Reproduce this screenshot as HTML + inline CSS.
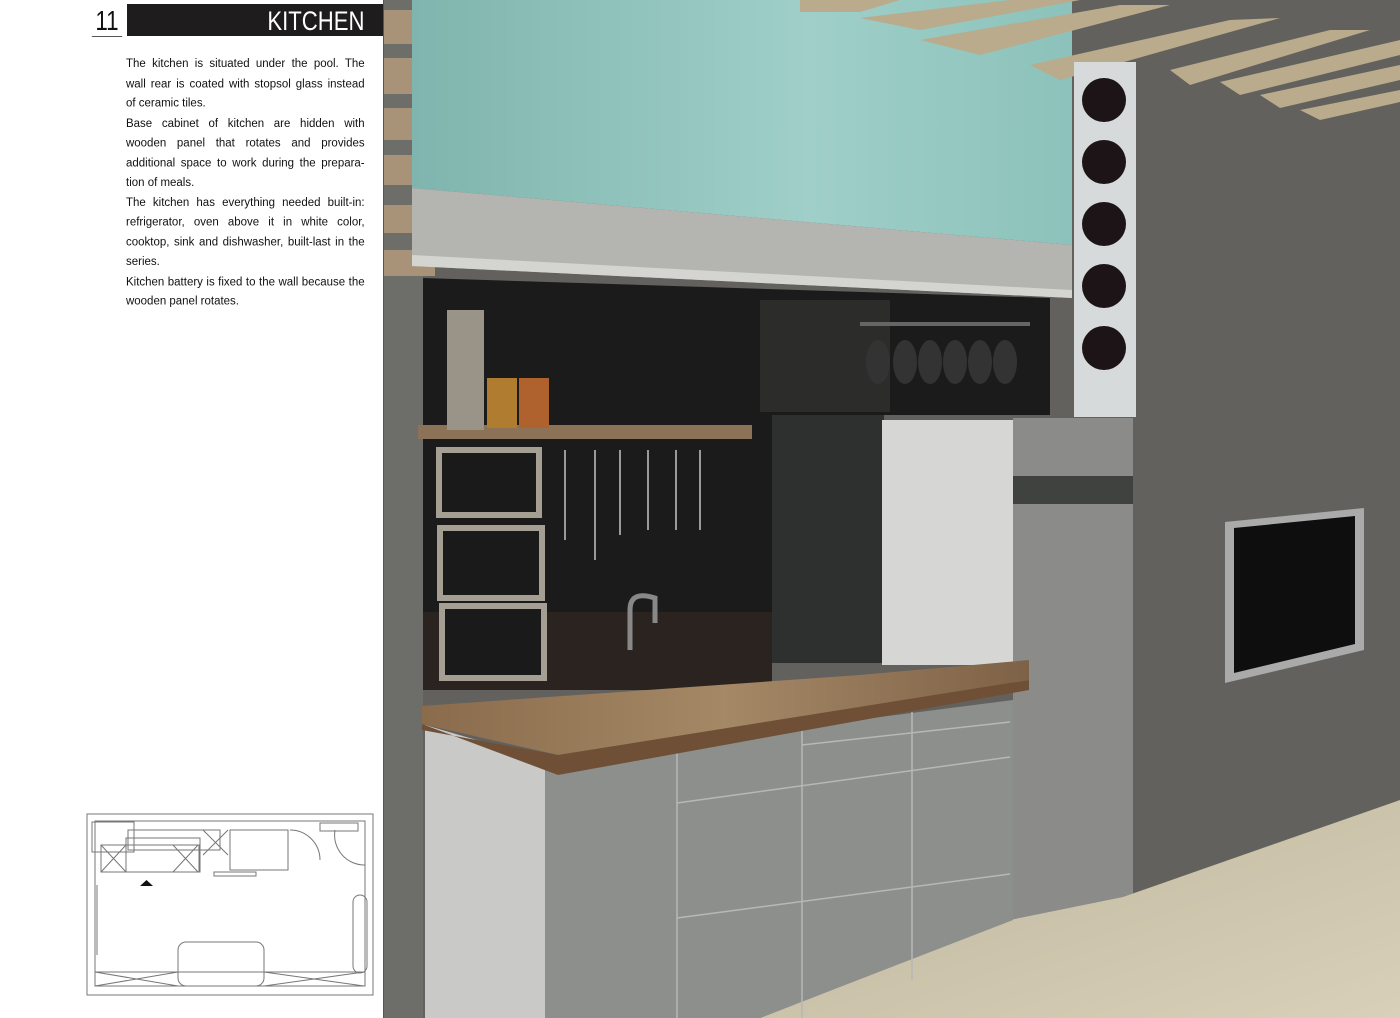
<!DOCTYPE html>
<html><head><meta charset="utf-8"><style>
*{margin:0;padding:0}
body{width:1400px;height:1018px;background:#fff;position:relative;overflow:hidden;font-family:"Liberation Sans",sans-serif}
#num{position:absolute;left:88px;top:5px;width:38px;height:31px;border-bottom:1px solid #555;font-size:28px;line-height:32px;color:#111;text-align:center;transform:scaleX(.8)}
#bar{position:absolute;left:127px;top:4px;width:256px;height:32px;background:#1e1c1c}
#bar span{position:absolute;right:18px;top:2px;color:#fff;font-size:27px;line-height:30px;transform:scaleX(.82);transform-origin:right}
#txt{position:absolute;left:126px;top:53px;width:291px;font-size:14px;line-height:22.5px;color:#111;transform:scale(.82,.88);transform-origin:left top}
#txt span{display:block;white-space:nowrap;text-align:justify;text-align-last:justify}
#txt span.l{text-align-last:left}
svg{position:absolute;left:0;top:0}
</style></head><body>
<div id="num">11</div>
<div id="bar"><span>KITCHEN</span></div>
<div id="txt">
<span>The kitchen is situated under the pool. The</span>
<span>wall rear is coated with stopsol glass instead</span>
<span class="l">of ceramic tiles.</span>
<span>Base cabinet of kitchen are hidden with</span>
<span>wooden panel that rotates and provides</span>
<span>additional space to work during the prepara-</span>
<span class="l">tion of meals.</span>
<span>The kitchen has everything needed built-in:</span>
<span>refrigerator, oven above it in white color,</span>
<span>cooktop, sink and dishwasher, built-last in the</span>
<span class="l">series.</span>
<span>Kitchen battery is fixed to the wall because the</span>
<span class="l">wooden panel rotates.</span>
</div>
<svg width="1400" height="1018" viewBox="0 0 1400 1018">
<defs>
<linearGradient id="gl" x1="0" y1="0" x2="1" y2="0"><stop offset="0" stop-color="#7fb5ae"/><stop offset=".6" stop-color="#9fcfc8"/><stop offset="1" stop-color="#8cc2bb"/></linearGradient>
<linearGradient id="wd" x1="0" y1="0" x2="1" y2="0"><stop offset="0" stop-color="#8a6c4c"/><stop offset=".5" stop-color="#a58866"/><stop offset="1" stop-color="#7e6247"/></linearGradient>
<linearGradient id="fl" x1="0" y1="0" x2="1" y2="1"><stop offset="0" stop-color="#bdb59c"/><stop offset="1" stop-color="#d8d0b8"/></linearGradient>
</defs>
<rect x="383" y="0" width="1017" height="1018" fill="#62615d"/>
<rect x="383" y="0" width="40" height="1018" fill="#6d6d69"/>
<g fill="#a89378"><rect x="383" y="10" width="50" height="34"/><rect x="383" y="58" width="50" height="36"/><rect x="383" y="108" width="50" height="32"/><rect x="383" y="155" width="50" height="30"/><rect x="383" y="205" width="52" height="28"/><rect x="383" y="250" width="52" height="26"/></g>
<polygon points="412,0 1072,0 1072,245 412,188" fill="url(#gl)"/>
<polygon points="412,188 1072,245 1072,298 412,266" fill="#b4b5b0"/>
<polygon points="412,255 1072,290 1072,298 412,266" fill="#d4d4d0"/>
<g fill="#b9ab8c">
<polygon points="800,0 900,0 860,12 800,12"/>
<polygon points="860,18 1010,0 1080,0 920,30"/>
<polygon points="920,40 1120,5 1170,5 980,55"/>
<polygon points="1030,65 1230,20 1280,18 1060,80"/>
<polygon points="1170,70 1330,30 1370,30 1190,85"/>
<polygon points="1220,82 1400,40 1400,55 1240,95"/>
<polygon points="1260,95 1400,65 1400,80 1280,108"/>
<polygon points="1300,110 1400,90 1400,102 1320,120"/>
</g>
<rect x="1074" y="62" width="62" height="355" fill="#d7dadb"/>
<g fill="#1c1416"><circle cx="1104" cy="100" r="22"/><circle cx="1104" cy="162" r="22"/><circle cx="1104" cy="224" r="22"/><circle cx="1104" cy="286" r="22"/><circle cx="1104" cy="348" r="22"/></g>
<polygon points="423,278 1050,298 1050,415 772,415 772,690 423,690" fill="#1b1b1b"/>
<rect x="760" y="300" width="130" height="112" fill="#2c2c2a"/>
<polygon points="423,612 772,612 772,690 423,690" fill="#2a2320"/>
<rect x="418" y="425" width="334" height="14" fill="#8c7256"/>
<rect x="447" y="310" width="37" height="120" fill="#9a9388"/>
<rect x="487" y="378" width="30" height="50" fill="#b07c30"/>
<rect x="519" y="378" width="30" height="50" fill="#b0622e"/>
<g fill="#1a1a1a" stroke="#a59e92" stroke-width="6"><rect x="439" y="450" width="100" height="65"/><rect x="440" y="528" width="102" height="70"/><rect x="442" y="606" width="102" height="72"/></g>
<g stroke="#9a9a9a" stroke-width="2"><line x1="565" y1="450" x2="565" y2="540"/><line x1="595" y1="450" x2="595" y2="560"/><line x1="620" y1="450" x2="620" y2="535"/><line x1="648" y1="450" x2="648" y2="530"/><line x1="676" y1="450" x2="676" y2="530"/><line x1="700" y1="450" x2="700" y2="530"/></g>
<path d="M630,650 v-40 q0,-20 25,-12 v25" stroke="#888" stroke-width="5" fill="none"/>
<rect x="860" y="322" width="170" height="4" fill="#666"/>
<g fill="#333"><ellipse cx="878" cy="362" rx="12" ry="22"/><ellipse cx="905" cy="362" rx="12" ry="22"/><ellipse cx="930" cy="362" rx="12" ry="22"/><ellipse cx="955" cy="362" rx="12" ry="22"/><ellipse cx="980" cy="362" rx="12" ry="22"/><ellipse cx="1005" cy="362" rx="12" ry="22"/></g>
<rect x="772" y="415" width="112" height="248" fill="#2e302f"/>
<rect x="882" y="420" width="133" height="245" fill="#d6d6d4"/>
<polygon points="1013,418 1133,418 1133,898 1013,920" fill="#8b8c89"/>
<rect x="1013" y="476" width="120" height="28" fill="#404240"/>
<polygon points="1123,897 1400,800 1400,1018 760,1018 1010,920" fill="url(#fl)"/>
<polygon points="425,725 545,760 545,1018 425,1018" fill="#c9c9c7"/>
<polygon points="545,760 1013,700 1013,920 760,1018 545,1018" fill="#8d8f8d"/>
<g stroke="#b5b8b8" stroke-width="1.5" fill="none">
<line x1="677" y1="748" x2="677" y2="1018"/><line x1="802" y1="725" x2="802" y2="1018"/><line x1="912" y1="712" x2="912" y2="980"/>
<line x1="677" y1="803" x2="1010" y2="757"/><line x1="677" y1="918" x2="1010" y2="874"/><line x1="802" y1="745" x2="1010" y2="722"/>
</g>
<polygon points="422,706 860,675 1029,660 1029,680 558,755 422,724" fill="url(#wd)"/>
<polygon points="558,755 1029,680 1029,690 558,775 422,724 422,730" fill="#6f5036"/>
<polygon points="1225,522 1364,508 1364,650 1225,683" fill="#a9aaa9"/>
<polygon points="1234,528 1355,516 1355,644 1234,673" fill="#0e0e0e"/>
<g stroke="#777" fill="none" stroke-width="1">
<rect x="87" y="814" width="286" height="181"/>
<rect x="95" y="821" width="270" height="165"/>
<rect x="92" y="822" width="42" height="30"/>
<rect x="128" y="830" width="92" height="20"/><rect x="126" y="838" width="74" height="34"/>
<rect x="101" y="845" width="98" height="27"/>
<path d="M101,845 l25,27 M126,845 l-25,27 M173,845 l25,27 M198,845 l-25,27 M203,830 l25,25 M228,830 l-25,25"/>
<rect x="230" y="830" width="58" height="40"/><rect x="214" y="872" width="42" height="4"/>
<path d="M290,830 a30,30 0 0 1 30,30 M335,830 a30,30 0 0 0 30,35"/>
<rect x="320" y="823" width="38" height="8"/>
<rect x="353" y="895" width="14" height="78" rx="7"/>
<rect x="178" y="942" width="86" height="44" rx="8"/>
<path d="M95,972 h270 M95,972 l83,14 M178,972 l-83,14 M264,972 l100,14 M364,972 l-100,14"/>
<path d="M97,885 v70"/>
</g>
<polygon points="140,886 153,886 146.5,880" fill="#111"/>
<rect x="383" y="0" width="1" height="1018" fill="#555"/>
</svg>
</body></html>
